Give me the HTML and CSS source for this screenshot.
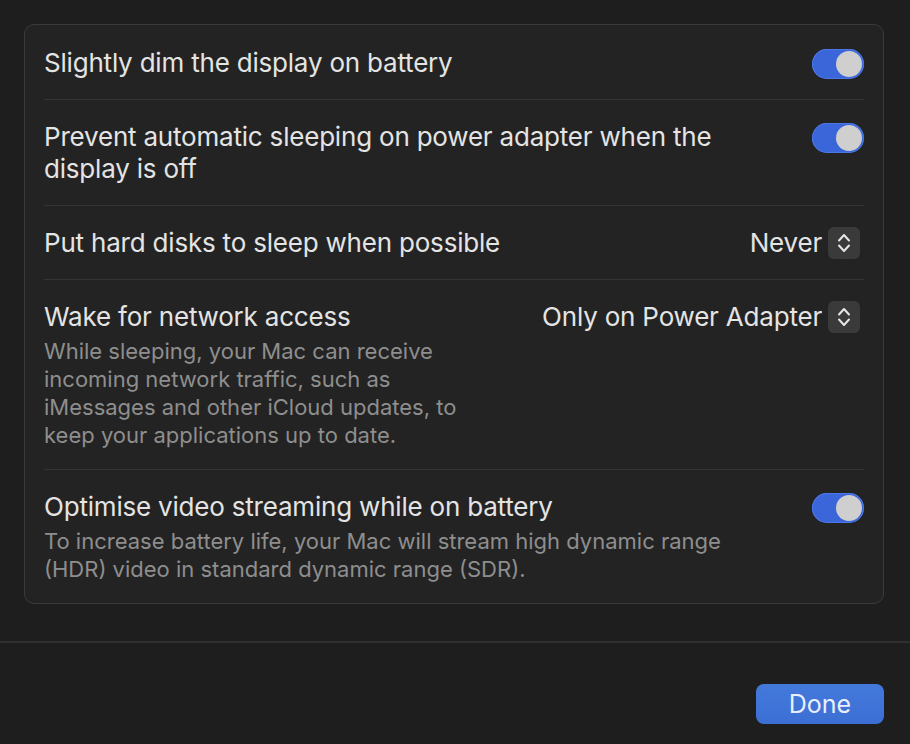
FILE: index.html
```
<!DOCTYPE html>
<html>
<head>
<meta charset="utf-8">
<link rel="stylesheet" href="styles.css">
</head>
<body>
<div class="sheet">
  <div class="card">
    <div class="row">
      <div class="label"><div class="title">Slightly dim the display on battery</div></div>
      <div class="toggle"><span class="knob"></span></div>
    </div>
    <div class="row">
      <div class="label"><div class="title">Prevent automatic sleeping on power adapter when the display is off</div></div>
      <div class="toggle"><span class="knob"></span></div>
    </div>
    <div class="row">
      <div class="label"><div class="title">Put hard disks to sleep when possible</div></div>
      <div class="popup"><span class="value">Never</span><span class="stepper"><svg width="16" height="24" viewBox="0 0 16 24"><path d="M3 9.5 L8 4 L13 9.5 M3 14.5 L8 20 L13 14.5" fill="none" stroke="#e6e6e6" stroke-width="2" stroke-linecap="round" stroke-linejoin="round"/></svg></span></div>
    </div>
    <div class="row">
      <div class="label">
        <div class="title">Wake for network access</div>
        <div class="desc narrow">While sleeping, your Mac can receive incoming network traffic, such as iMessages and other iCloud updates, to keep your applications up to date.</div>
      </div>
      <div class="popup"><span class="value">Only on Power Adapter</span><span class="stepper"><svg width="16" height="24" viewBox="0 0 16 24"><path d="M3 9.5 L8 4 L13 9.5 M3 14.5 L8 20 L13 14.5" fill="none" stroke="#e6e6e6" stroke-width="2" stroke-linecap="round" stroke-linejoin="round"/></svg></span></div>
    </div>
    <div class="row">
      <div class="label">
        <div class="title">Optimise video streaming while on battery</div>
        <div class="desc">To increase battery life, your Mac will stream high dynamic range (HDR) video in standard dynamic range (SDR).</div>
      </div>
      <div class="toggle"><span class="knob"></span></div>
    </div>
  </div>
</div>
<div class="footer">
  <button class="done">Done</button>
</div>
</body>
</html>
```
FILE: styles.css
```
html, body {
  margin: 0;
  padding: 0;
  background: #1e1e1e;
  width: 910px;
  height: 744px;
  overflow: hidden;
  font-family: Inter, "Open Sans", sans-serif;
  -webkit-font-smoothing: antialiased;
}
.sheet {
  padding: 24px 26px 0 24px;
  height: 643px;
  box-sizing: border-box;
  border-bottom: 2px solid #2f2f2f;
}
.card {
  background: #232323;
  border: 1px solid #3a3a3a;
  border-radius: 10px;
  padding: 0 19px;
}
.row {
  display: flex;
  justify-content: space-between;
  align-items: flex-start;
  padding: 21px 0 20px;
  border-bottom: 1px solid #343434;
}
.row:first-child {
  padding-top: 22px;
}
.row:last-child {
  border-bottom: none;
}
.label {
  flex: 1;
  min-width: 0;
}
.title {
  color: #e4e4e4;
  font-size: 26px;
  line-height: 32px;
  max-width: 700px;
  letter-spacing: -0.2px;
}
.desc {
  color: #8e8e8e;
  font-size: 22px;
  line-height: 28px;
  margin-top: 4px;
  max-width: 700px;
}
.desc.narrow {
  max-width: 430px;
}
.toggle {
  width: 52px;
  height: 30px;
  border-radius: 15px;
  background: #3b66d9;
  box-shadow: inset 0 0 0 1px #4b78e6;
  position: relative;
  margin-top: 2px;
  flex: none;
}
.knob {
  position: absolute;
  right: 2px;
  top: 2px;
  width: 26px;
  height: 26px;
  border-radius: 50%;
  background: #cfcfcf;
}
.popup {
  display: flex;
  align-items: center;
  gap: 6px;
  flex: none;
  margin-right: 4px;
}
.value {
  color: #e4e4e4;
  font-size: 26px;
  line-height: 32px;
  letter-spacing: -0.2px;
}
.stepper {
  width: 32px;
  height: 32px;
  border-radius: 6px;
  background: #3a3a3a;
  display: flex;
  align-items: center;
  justify-content: center;
}
.footer {
  display: flex;
  justify-content: flex-end;
  padding: 41px 26px 0 0;
}
.done {
  width: 128px;
  height: 40px;
  border: none;
  border-radius: 8px;
  background: linear-gradient(#4479dc, #3c6fd3);
  color: #e9effc;
  font-family: Inter, sans-serif;
  font-size: 25px;
  padding: 0;
}
```
